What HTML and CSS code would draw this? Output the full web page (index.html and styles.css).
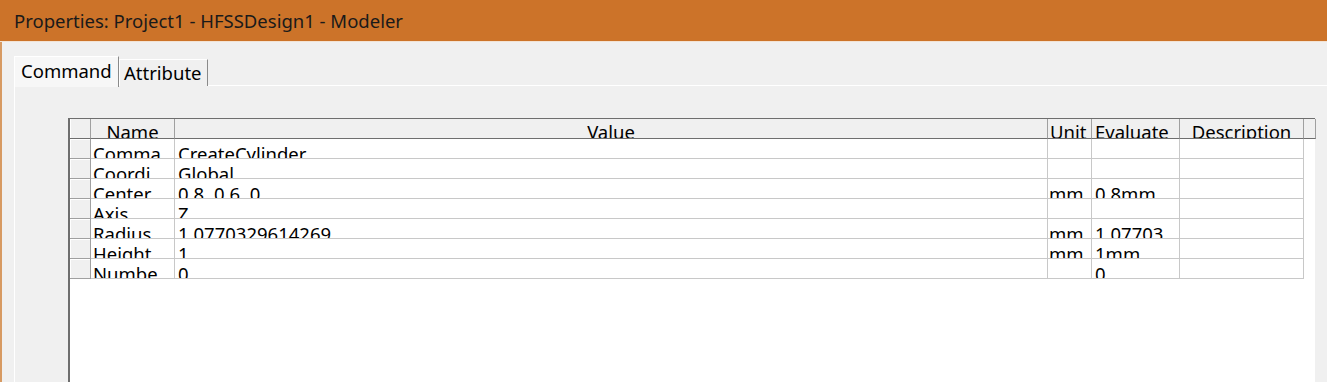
FILE: index.html
```html
<!DOCTYPE html>
<html>
<head>
<meta charset="utf-8">
<link rel="stylesheet" href="styles.css">
</head>
<body>
<div class="window">
  <div class="titlebar">Properties: Project1 - HFSSDesign1 - Modeler</div>
  <div class="content">
    <div class="tabs">
      <div class="tab active">Command</div>
      <div class="tab attr">Attribute</div>
      <div class="tab-fill"></div>
    </div>
    <div class="panel">
      <div class="grid">
        <div class="row head">
          <div class="c rh"></div>
          <div class="c name">Name</div>
          <div class="c value">Value</div>
          <div class="c unit">Unit</div>
          <div class="c eval">Evaluate</div>
          <div class="c desc">Description</div>
          <div class="c extra"></div>
        </div>
        <div class="row">
          <div class="c rh"></div><div class="c name">Comma</div><div class="c value">CreateCylinder</div><div class="c unit"></div><div class="c eval"></div><div class="c desc"></div>
        </div>
        <div class="row">
          <div class="c rh"></div><div class="c name">Coordi</div><div class="c value">Global</div><div class="c unit"></div><div class="c eval"></div><div class="c desc"></div>
        </div>
        <div class="row">
          <div class="c rh"></div><div class="c name">Center</div><div class="c value">0.8 ,0.6 ,0</div><div class="c unit">mm</div><div class="c eval">0.8mm</div><div class="c desc"></div>
        </div>
        <div class="row">
          <div class="c rh"></div><div class="c name">Axis</div><div class="c value">Z</div><div class="c unit"></div><div class="c eval"></div><div class="c desc"></div>
        </div>
        <div class="row">
          <div class="c rh"></div><div class="c name">Radius</div><div class="c value">1.0770329614269</div><div class="c unit">mm</div><div class="c eval">1.07703</div><div class="c desc"></div>
        </div>
        <div class="row">
          <div class="c rh"></div><div class="c name">Height</div><div class="c value">1</div><div class="c unit">mm</div><div class="c eval">1mm</div><div class="c desc"></div>
        </div>
        <div class="row">
          <div class="c rh"></div><div class="c name">Numbe</div><div class="c value">0</div><div class="c unit"></div><div class="c eval">0</div><div class="c desc"></div>
        </div>
      </div>
    </div>
  </div>
</div>
</body>
</html>
```

FILE: styles.css
```css
html, body {
  margin: 0;
  padding: 0;
  height: 100%;
  overflow: hidden;
  background: #f0f0f0;
  font-family: "Noto Sans", "Open Sans", sans-serif;
  color: #000;
}

.window {
  height: 382px;
  display: flex;
  flex-direction: column;
}

.titlebar {
  flex: none;
  height: 42px;
  box-sizing: border-box;
  background: #cc7329;
  color: #1a1a1a;
  font-size: 18.5px;
  line-height: 41px;
  padding-left: 14px;
  border-bottom: 1px solid #f3e3d4;
}

.content {
  flex: 1;
  border-left: 2px solid #d79a62;
  padding-left: 12px;
  padding-top: 13px;
  display: flex;
  flex-direction: column;
  min-height: 0;
}

.tabs {
  display: flex;
  align-items: flex-end;
  height: 31px;
  flex: none;
}

.tab {
  font-size: 18.5px;
  height: 27px;
  box-sizing: border-box;
  padding: 0 0 0 4px;
  line-height: 26px;
  border-top: 1px solid #ffffff;
  border-left: 1px solid #ffffff;
  border-right: 1px solid #8a8a8a;
  background: #f0f0f0;
  white-space: nowrap;
  overflow: hidden;
}

.tab.attr {
  width: 89px;
}

.tab.active {
  height: 31px;
  width: 105px;
  padding-left: 6px;
  line-height: 28px;
  background: #f7f7f7;
  position: relative;
  z-index: 1;
  margin-bottom: -1px;
}

.tab-fill {
  flex: 1;
  border-bottom: 1px solid #ffffff;
  height: 27px;
  box-sizing: border-box;
}

.panel {
  flex: 1;
  border-left: 1px solid #ffffff;
  padding-left: 54px;
  padding-top: 32px;
  min-height: 0;
}

.grid {
  width: 1247px;
  height: 100%;
  background: #ffffff;
  border-left: 2px solid #6e6e6e;
  border-top: 1px solid #6e6e6e;
  box-sizing: border-box;
  margin-left: -1px;
}

.row {
  display: flex;
  height: 20px;
}

.c {
  height: 20px;
  box-sizing: border-box;
  border-right: 1px solid #c8c8c8;
  border-bottom: 1px solid #c8c8c8;
  overflow: hidden;
  white-space: nowrap;
  font-size: 18.5px;
  line-height: 19px;
  padding-top: 5px;
  padding-left: 2px;
  flex: none;
}

.rh {
  width: 21px;
  background: #f0f0f0;
  border-right: 1px solid #a0a0a0;
  border-bottom: 1px solid #a0a0a0;
  box-shadow: inset 1px 1px 0 #ffffff;
}

.name { width: 84px; }
.value { width: 873px; padding-left: 3px; }
.unit { width: 44px; padding-left: 1px; }
.eval { width: 88px; padding-left: 3px; }
.desc { width: 124px; }
.extra { width: 12px; }

.head .c {
  background: #f0f0f0;
  text-align: center;
  padding-left: 0;
  padding-top: 3px;
  border-right: 1px solid #a0a0a0;
  border-bottom: 1px solid #6e6e6e;
}

.head .unit {
  text-align: left;
  padding-left: 2px;
}

.head .eval {
  text-align: left;
  padding-left: 3px;
}

.head .rh {
  box-shadow: inset 1px 0 0 #ffffff;
}
```
